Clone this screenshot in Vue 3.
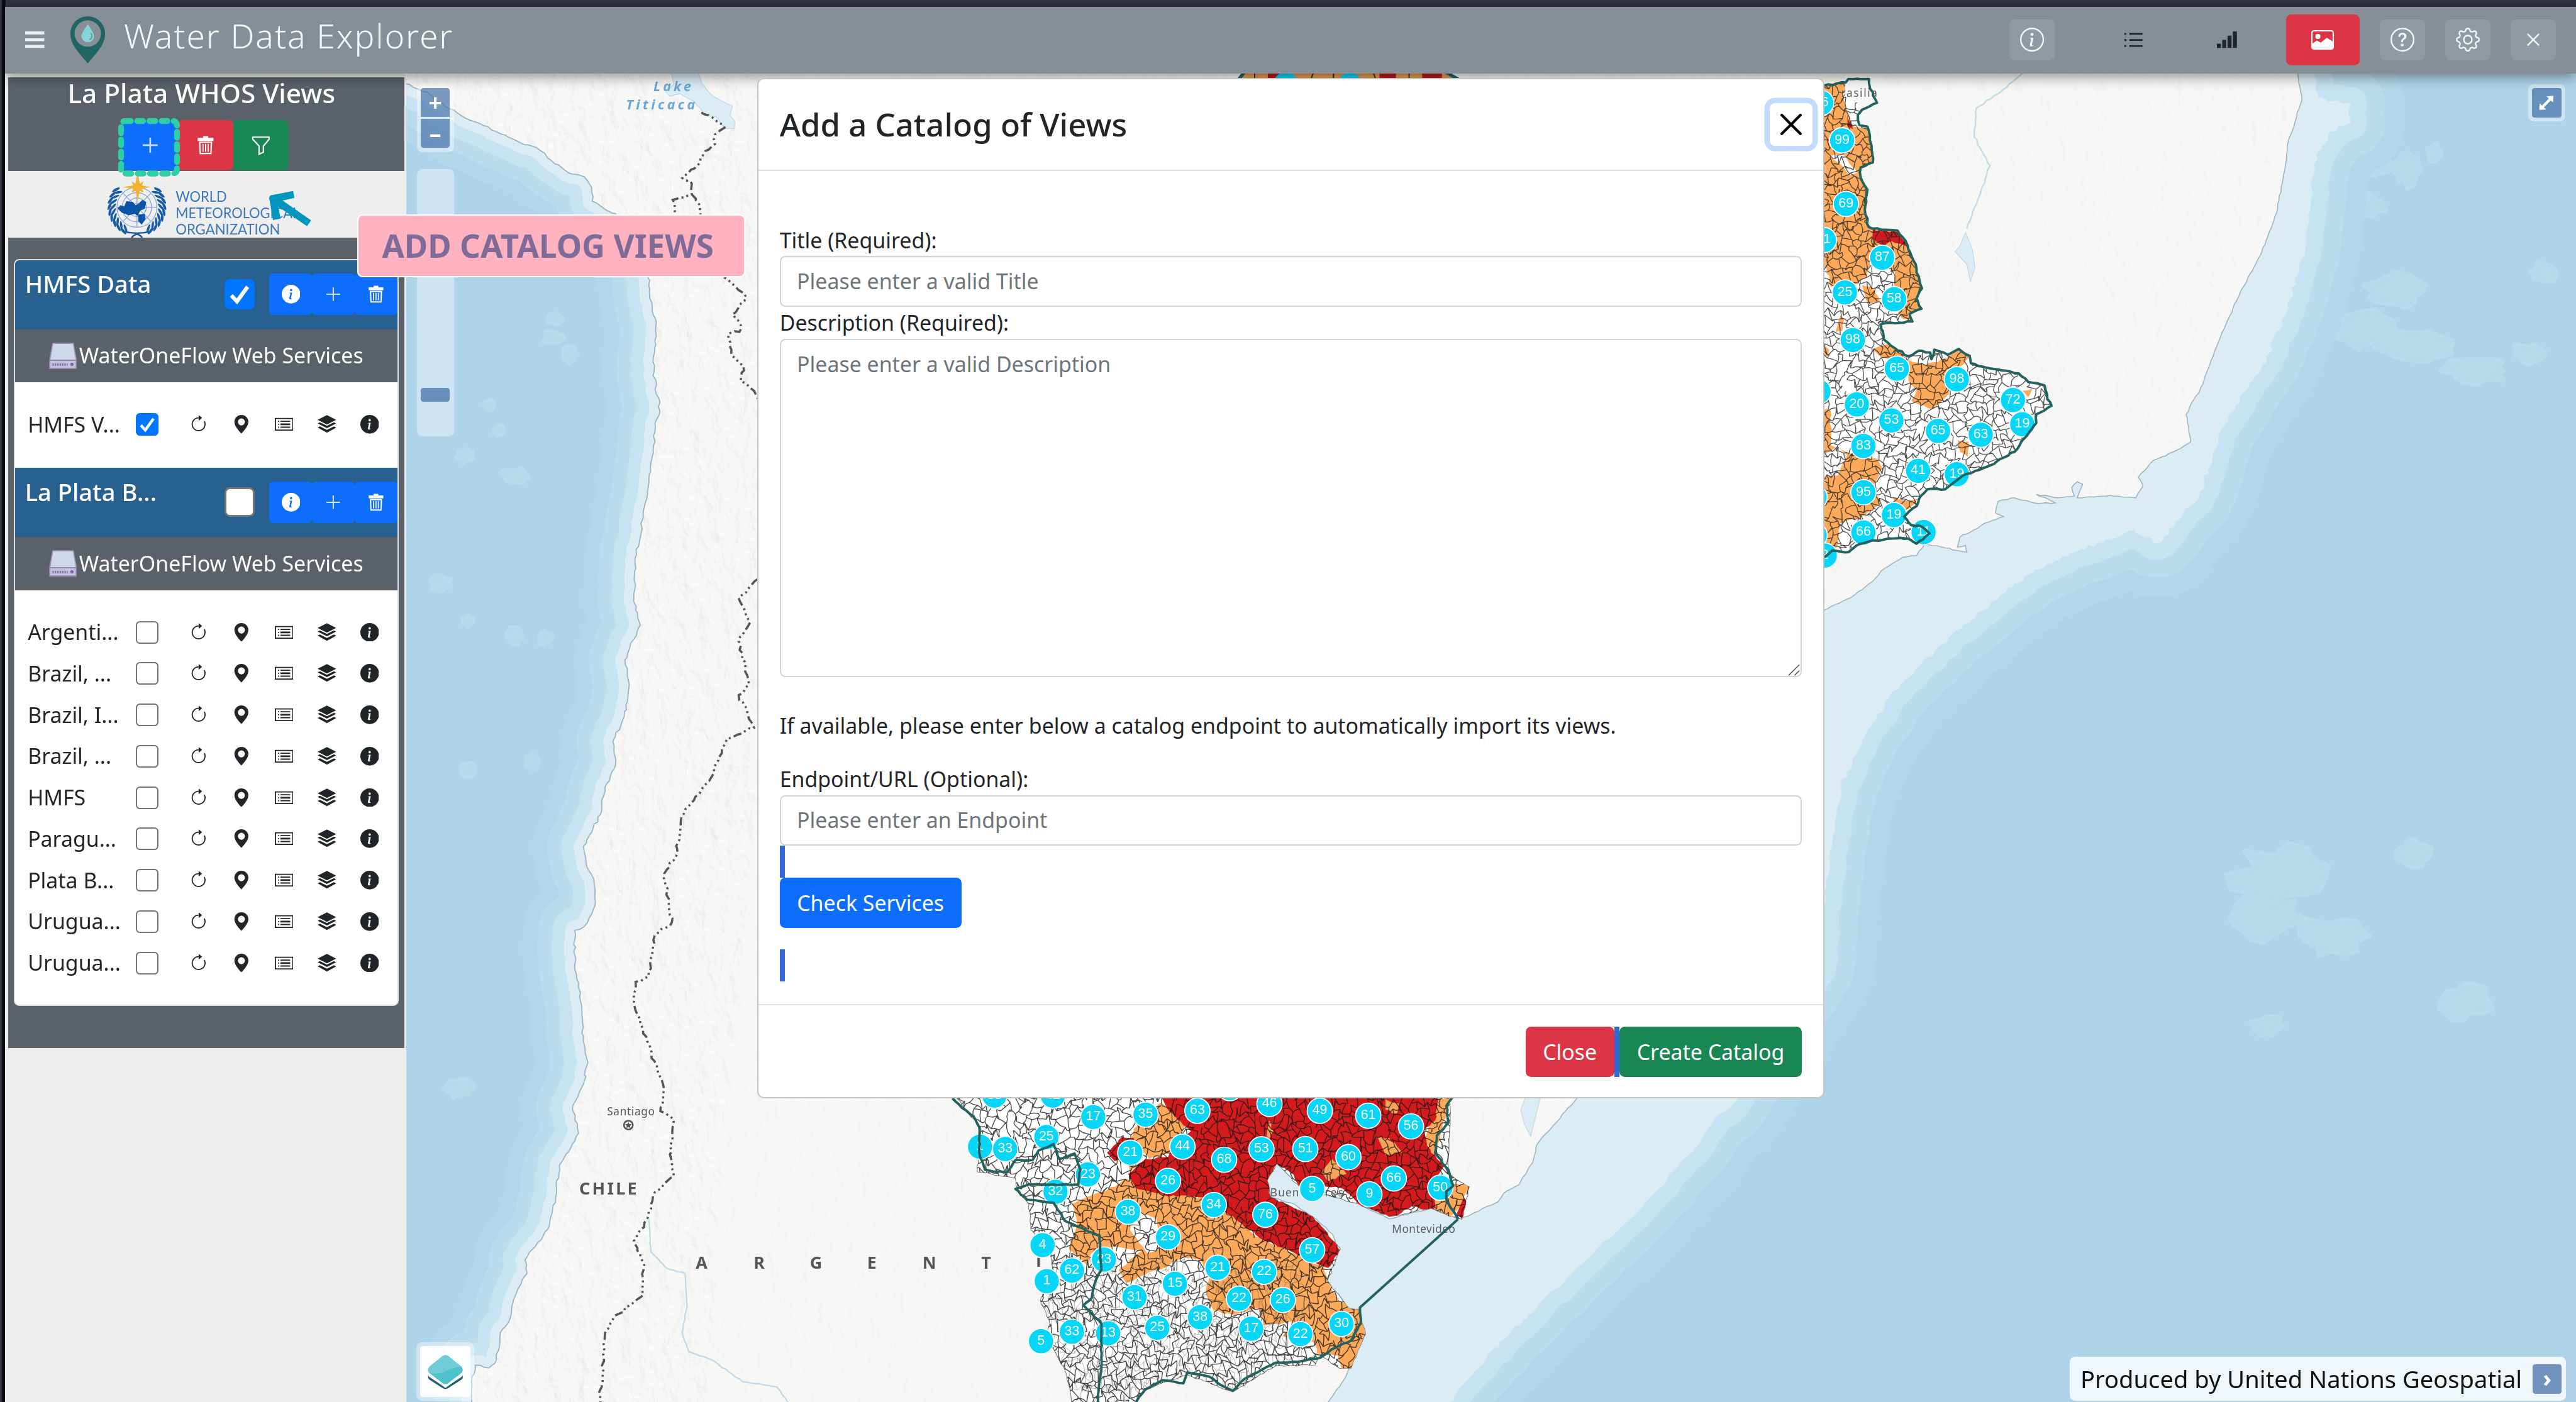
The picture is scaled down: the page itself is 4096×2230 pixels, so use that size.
<script setup>
/* ---------- deterministic helpers for the map drawing ---------- */
let seed = 7
const rnd = () => {
  seed = (seed * 16807) % 2147483647
  return seed / 2147483647
}
// A sheet maps its own survey coordinates onto the map plane.
const sheet = (ox, oy, sx, sy) => (s) =>
  s.split(' ').map((p) => {
    const [x, y] = p.split(',').map(Number)
    return [ox + x * sx, oy + y * sy]
  })
const north = sheet(234, 39, 0.16582, 0.16582)
const west = sheet(234, 338, 0.23214, 0.32896)
const east = sheet(1079, 39, 0.16581, 0.20726)
const south = sheet(572, 650, 0.23214, 0.13)
const plane = sheet(0, 0, 1, 1)

const rough = (pts, amp = 0.9) => {
  const out = [pts[0]]
  for (let i = 1; i < pts.length; i++) {
    const [ax, ay] = pts[i - 1]
    const [bx, by] = pts[i]
    const n = Math.min(14, Math.max(1, Math.round(Math.hypot(bx - ax, by - ay) / 2.6)))
    for (let k = 1; k < n; k++) {
      const t = k / n
      out.push([ax + (bx - ax) * t + (rnd() - 0.5) * amp * 2, ay + (by - ay) * t + (rnd() - 0.5) * amp * 2])
    }
    out.push([bx, by])
  }
  return out
}
const line = (pts) => 'M' + pts.map((p) => p[0].toFixed(1) + ' ' + p[1].toFixed(1)).join('L')
const area = (pts) => line(pts) + 'Z'

/* ---------- coasts ---------- */
const pacific = rough([
  ...north('70,60 110,88 160,105 185,130 240,165 300,200 380,230 395,243 430,258 500,290 560,308 600,345 680,402 735,415 762,455 765,505 820,540 850,550 900,600 950,700 970,785 975,825 985,890 1000,950 1000,1000 993,1060 988,1145 1000,1170 995,1195 1010,1230 1010,1290 995,1320 990,1400 978,1480 968,1568'),
  ...west('662,0 655,80 672,130 632,195 643,240 630,300 600,345 607,390 580,430 568,480 523,540 530,570 550,600 553,650 525,688 500,695 500,760 515,810 523,900 535,940 525,975 495,1020 510,1070 460,1130 450,1190 430,1248 370,1305 375,1330 345,1370 330,1415 305,1440 295,1490 275,1505 240,1500 230,1530 228,1580'),
], 0.7)
const estuary = south('1020,1568 1055,1480 1080,1400 1118,1250 1100,1135 1075,1130 1050,1100 1018,1000 1020,950 1040,900 1045,850 1030,780 980,700 930,640 870,610 860,530 885,450 920,490 945,560 1020,540 1060,570 1100,640 1180,710 1290,660 1360,712 1395,690 1465,630 1480,590 1520,550 1555,450 1568,360')
const brazil = [
  ...plane('960,669 1000,600 1060,450 1110,372'),
  ...east('290,1568 370,1520 400,1490 480,1450 530,1445 560,1410 680,1430 715,1435 710,1415 680,1420 690,1390 740,1370 780,1350 850,1330 820,1320 830,1285 890,1275 960,1290 1040,1290 970,1265 1050,1275 1110,1270 1100,1245 1120,1228 1140,1235 1120,1275 1240,1268 1335,1275 1362,1240 1345,1215 1400,1165 1500,1130 1537,1110 1520,1030 1545,990 1568,965'),
  ...plane('1352,205 1364,178 1376,156 1386,130 1391,104 1393,87 1396.7,77 1398.5,69 1401.5,61 1398,40'),
]
const atlantic = rough([...estuary, ...brazil], 0.35)
const land = area([...plane('240,30'), ...pacific, ...plane('287,870 809,870'), ...atlantic])
const pacificLine = line(pacific)
const atlanticLine = line(atlantic)

const shelfEdge = rough(plane('878,870 883,854 910,821 936,796 1000,735 1060,665 1108,590 1112,540 1121,480 1128,462 1150,425 1190,385 1217,364 1235,350 1261,337 1299,323 1314,331 1339,302 1352,262 1378,222 1392,190 1404,150 1409,100 1419,80 1431,75 1431,63 1411,60 1408,40'), 1.2)
const shelf = area([...atlantic, ...plane('1408,40'), ...[...shelfEdge].reverse()])
const shelfLine = line(shelfEdge)
const blob = (cx, cy, rx, ry) => {
  const n = 16
  const pts = []
  for (let k = 0; k < n; k++) {
    const r = 0.65 + rnd() * 0.55
    pts.push([cx + Math.cos((k / n) * 6.283) * rx * r, cy + Math.sin((k / n) * 6.283) * ry * r])
  }
  return area(pts)
}
const seamounts = [
  [1446, 100, 9, 6], [1466, 104, 8, 10], [1482, 93, 4, 5], [1440, 125, 12, 7], [1458, 178, 18, 10], [1436, 200, 26, 12],
  [1470, 212, 22, 9], [1508, 226, 20, 7], [1540, 215, 12, 6], [1548, 166, 8, 6], [1420, 168, 10, 12],
  [1393, 533, 32, 18], [1378, 560, 24, 14], [1420, 570, 20, 12], [1470, 520, 10, 8], [1500, 610, 16, 10], [1380, 625, 10, 6],
  [338, 194, 4, 3], [337, 206, 6, 4], [347, 216, 4, 5], [298, 247, 3, 3], [304, 262, 3, 3], [283, 277, 5, 4], [314, 290, 8, 4],
  [313, 387, 5, 5], [332, 389, 4, 4], [285, 378, 3, 3], [268, 355, 6, 5], [324, 464, 4, 4], [285, 469, 4, 4], [280, 663, 8, 5],
].map((m) => blob(...m))

/* ---------- inland water, borders ---------- */
const titicaca = area(rough(north('1055,35 1155,35 1165,70 1210,120 1280,155 1270,190 1290,215 1285,240 1250,235 1220,195 1180,190 1140,140 1085,110 1050,120 1035,105 1065,75'), 0.3))
const reservoir = area(east('710,495 735,545 745,600 728,640 715,590 672,552 690,535'))
const lagoon = area(plane('929,668 938,668 934,684 932,692 928,684 926,676'))
const rivers = [
  line(rough(east('930,20 850,75 750,130 742,215 800,300 755,400 715,485'), 0.5)),
  line(rough(west('695,1230 700,1290 740,1320 790,1330 795,1390 782,1440 800,1475 860,1490 940,1530 1030,1540 1070,1580'), 0.3)),
]
const borders = [
  north('1165,180 1215,205 1250,235 1215,260 1215,295 1180,320 1140,385 1095,420 1130,440 1130,480 1060,500 1068,548 1120,650'),
  north('1130,480 1160,520 1160,548 1200,700 1250,785 1300,830 1330,860 1280,920 1310,960 1305,985 1265,990 1275,1070 1320,1110 1310,1165 1345,1190 1375,1235'),
  west('980,45 930,80 960,125 930,160 957,240 930,260 970,320 900,340 860,410 780,485 765,560 735,590 755,680 710,705 695,780 660,790 655,830 690,900 735,990 725,1030 760,1045 750,1110 760,1150 710,1180 690,1230 655,1270 680,1310 680,1370 600,1415 580,1440 565,1580'),
].map((p) => line(rough(p, 0.8)))

/* ---------- catchment ---------- */
const eastRim = rough(east('160,70 188,65 270,55 280,45 355,45 360,75 385,115 330,135 315,150 320,180 350,185 365,240 370,290 325,305 325,335 350,370 340,430 355,480 400,488 460,490 490,520 520,580 550,660 530,690 548,720 505,735 515,757 400,765 410,810 450,835 500,860 540,843 580,848 585,868 595,840 645,855 685,838 725,858 730,880 800,895 905,910 940,935 1000,945 1010,985 1025,1005 970,1030 970,1055 915,1110 890,1140 800,1180 700,1210 635,1250 570,1250 545,1270 530,1300 485,1330 510,1355 550,1360 578,1380 530,1410 500,1395 440,1395 370,1400 310,1415 280,1435 220,1430 180,1460'), 0.5)
const southRim = south('35,145 60,190 90,230 105,280 105,400 120,480 150,490 180,490 200,435 245,435 260,390 300,360 315,430 355,405 370,480 365,550 290,550 235,548 200,570 230,620 300,635 330,720 420,790 425,950 410,1000 400,1080 378,1115 425,1200 425,1400 415,1580')
const southRim2 = south('510,1580 540,1510 585,1465 640,1480 650,1430 710,1450 740,1490 770,1515 800,1460 880,1385 940,1380 1000,1360 1030,1320 1080,1280 1105,1200 1103,1125')
const southRim3 = south('1360,712 1330,620 1330,580 1348,555 1335,480 1300,400 1305,320 1335,260 1330,180 1350,130')
const rims = [line(eastRim), line(rough(southRim, 0.3)), line(rough(southRim2, 0.3)) + 'L' + line(south('1103,1125 1360,712')).slice(1), line(rough(southRim3, 0.4))]
const eastBasin = area(eastRim)
const southBasin = area(rough(south('40,130 110,290 100,490 200,520 205,570 235,640 240,760 290,860 300,960 265,1090 290,1200 280,1260 330,1420 350,1580 510,1580 540,1510 650,1440 770,1520 880,1400 985,1395 1000,1350 1050,1410 1080,1410 1118,1250 1100,1135 1075,1130 1018,1000 1052,850 980,700 880,615 870,610 860,530 885,450 945,560 1100,640 1180,700 1290,660 1330,690 1370,712 1390,560 1335,500 1340,130'), 0.5))

const orange = [
  east('160,70 280,45 285,65 260,90 280,150 300,185 350,190 365,240 370,290 325,305 325,335 350,370 340,430 355,480 400,488 460,490 490,520 520,580 550,660 548,720 510,755 480,750 440,700 450,610 360,580 350,620 300,650 215,655 200,600 160,590'),
  east('330,650 365,655 395,700 350,705'), east('250,740 265,750 258,785 232,790'),
  east('370,840 450,812 490,870 440,872 400,862'),
  east('500,870 560,885 640,865 685,840 725,860 690,890 640,925 650,970 590,1015 510,990 530,960 500,930'),
  east('160,1010 215,1020 215,1120 270,1140 390,1165 405,1190 370,1240 400,1290 330,1330 250,1350 240,1420 160,1430'),
  east('440,1270 490,1285 535,1278 500,1310 460,1300'), east('680,1105 720,1110 718,1155 690,1140'), east('920,960 955,955 940,980'),
  east('160,820 210,840 200,860 160,850'),
  south('490,520 590,590 690,610 760,690 840,800 940,880 1010,940 1018,1000 1050,1100 1100,1135 1118,1250 1080,1412 1055,1412 1045,1350 990,1340 985,1290 900,1260 930,1190 850,1210 840,1130 770,1160 720,1140 700,1060 710,960 680,900 640,890 590,940 550,960 490,1010 470,950 530,860 460,840 400,870 390,930 340,850 360,740 350,640 400,600 460,560'),
  south('580,165 650,250 610,400 550,430 505,330 510,290'), south('495,420 520,440 500,500'),
  south('1310,145 1340,145 1330,200 1320,290 1300,420 1270,340 1290,250'),
  south('1330,540 1392,555 1370,640 1340,700 1300,670 1300,560'),
]
const red = [
  east('370,488 460,495 498,540 440,522 400,532 368,515'), east('275,150 297,192 278,185'), east('160,205 195,205 195,225 160,230'),
  south('580,130 1310,130 1300,250 1270,300 1290,400 1325,460 1290,560 1302,660 1280,670 1240,650 1190,710 1100,640 1060,570 1040,560 945,560 920,490 885,450 860,530 870,610 980,700 1030,780 1052,860 1020,940 940,880 840,800 760,690 690,610 590,600 520,570 495,500 540,430 600,420 660,300 600,200'),
  south('440,400 480,325 510,330 515,420 460,440'), south('1375,610 1384,630 1372,712 1356,690'),
]
const gold = [south('1150,330 1180,330 1215,400 1170,410'), south('1030,430 1068,500 1020,535 1002,490'), south('865,250 876,300 866,335 858,320'), south('1170,150 1205,170 1200,215 1170,200')]
const holes = [east('210,272 260,265 312,322 285,328 250,295'), east('350,600 450,610 440,650 400,690 350,640'), south('520,670 570,710 580,850 545,870 500,760'), east('180,1150 240,1125 275,1150 240,1210 180,1215')]
const fills = [
  ...orange.map((p) => ({ d: area(rough(p, 0.7)), c: '#fca95a' })),
  ...red.map((p) => ({ d: area(rough(p, 0.7)), c: '#d31a1d' })),
  ...gold.map((p) => ({ d: area(rough(p, 0.7)), c: '#f5a557' })),
  ...holes.map((p) => ({ d: area(rough(p, 0.5)), c: '#ffffff' })),
]

// Sub-catchment mesh: a brick lattice whose nodes are shaken out of place.
const mesh = (x0, y0, x1, y1, w, h) => {
  const nx = Math.ceil((x1 - x0) / w)
  const ny = Math.ceil((y1 - y0) / h)
  const v = []
  for (let j = 0; j <= ny; j++) {
    v.push([])
    for (let i = 0; i <= nx; i++) v[j].push([x0 + i * w + (rnd() - 0.5) * w * 1.5, y0 + j * h + (rnd() - 0.5) * h * 1.4])
  }
  const f = (p) => p[0].toFixed(1) + ' ' + p[1].toFixed(1)
  const mid = (a, b) => [(a[0] + b[0]) / 2 + (rnd() - 0.5) * 1.5, (a[1] + b[1]) / 2 + (rnd() - 0.5) * 1.5]
  let d = ''
  for (let j = 0; j <= ny; j++)
    for (let i = 0; i <= nx; i++) {
      if (i < nx && rnd() > 0.08) d += 'M' + f(v[j][i]) + 'L' + f(mid(v[j][i], v[j][i + 1])) + 'L' + f(v[j][i + 1])
      if (j < ny && (i + j) % 2 === 0) d += 'M' + f(v[j][i]) + 'L' + f(mid(v[j][i], v[j + 1][i])) + 'L' + f(v[j + 1][i])
    }
  return d
}
const eastMesh = mesh(1106, 42, 1254, 352, 2.8, 4)
const southMesh = mesh(572, 664, 905, 856, 2.8, 4.4)
const pampaMesh = mesh(600, 770, 790, 856, 2.6, 6.5)

/* ---------- station clusters ---------- */
const pins = (project, rows) => rows.map(([x, y, n]) => {
  const [[px, py]] = project(x + ',' + y)
  return { x: px, y: py, n }
})
const stations = [
  ...pins(east, [[180, 115, '56'], [257, 225, '99'], [271, 412, '69'], [190, 518, '11'], [404, 570, '87'], [267, 672, '25'], [448, 692, '58'], [296, 812, '98'], [458, 896, '65'], [678, 927, '98'], [170, 963, ''], [311, 1001, '20'], [884, 988, '72'], [918, 1059, '19'], [438, 1048, '53'], [609, 1079, '65'], [766, 1090, '63'], [335, 1123, '83'], [536, 1196, '41'], [678, 1206, '19'], [335, 1259, '95'], [156, 1273, ''], [447, 1326, '19'], [335, 1377, '66'], [556, 1376, '11'], [156, 1385, ''], [193, 1445, '2']]),
  ...pins(south, [[145, 133, '33'], [298, 133, '42'], [404, 233, '17'], [541, 222, '35'], [677, 204, '63'], [762, 98, ''], [866, 172, '46'], [998, 204, '49'], [1125, 227, '61'], [1237, 277, '56'], [281, 327, '25'], [107, 372, '1'], [173, 383, '33'], [501, 400, '21'], [638, 372, '44'], [747, 433, '68'], [845, 384, '53'], [960, 383, '51'], [1073, 421, '60'], [390, 502, '23'], [600, 532, '26'], [978, 570, '5'], [1128, 595, '9'], [1192, 521, '66'], [1314, 564, '50'], [305, 583, '32'], [495, 677, '38'], [720, 645, '34'], [855, 691, '76'], [600, 796, '29'], [978, 857, '57'], [271, 833, '4'], [348, 952, '62'], [432, 901, '23'], [730, 939, '21'], [852, 958, '22'], [282, 1002, '1'], [618, 1014, '15'], [512, 1077, '31'], [786, 1084, '22'], [901, 1090, '26'], [348, 1239, '33'], [443, 1246, '13'], [572, 1220, '25'], [684, 1171, '38'], [818, 1225, '17'], [947, 1250, '22'], [1055, 1202, '30'], [267, 1283, '5']]),
]
const argentina = [['A', 427.4], ['R', 462.4], ['G', 497], ['E', 531], ['N', 566], ['T', 600.6]]

/* ---------- sidebar data ---------- */
const catalogs = [
  { title: 'HMFS Data', on: true, tall: true, views: [{ name: 'HMFS V...', on: true }] },
  {
    title: 'La Plata B...', on: false, tall: false,
    views: ['Argenti...', 'Brazil, ...', 'Brazil, I...', 'Brazil, ...', 'HMFS', 'Paragu...', 'Plata B...', 'Urugua...', 'Urugua...'].map((name) => ({ name, on: false })),
  },
]
const glyphs = {
  info: ['M8 16A8 8 0 1 0 8 0a8 8 0 0 0 0 16m.93-9.412-1 4.705c-.07.34.029.533.304.533.194 0 .487-.07.686-.246l-.088.416c-.287.346-.92.598-1.465.598-.703 0-1.002-.422-.808-1.319l.738-3.468c.064-.293.006-.399-.287-.47l-.451-.081.082-.381 2.29-.287zM8 5.5a1 1 0 1 1 0-2 1 1 0 0 1 0 2'],
  plus: ['M7.500 2.200h1v5.300h5.300v1H8.500v5.300h-1V8.500H2.200v-1h5.300z'],
  trash: ['M6 .8h4v1.300h4.300v2.600H1.700V2.100H6zM2.700 5.200h10.600l-.5 10H3.200zM3.900 6.300l.3 7.800h7.600l.3-7.800z', 'M5.500 7h.9v6.300h-.9zM7.550 7h.9v6.300h-.9zM9.600 7h.9v6.300h-.9z'],
  reload: ['M8 3a5 5 0 1 0 4.546 2.914.5.5 0 0 1 .908-.417A6 6 0 1 1 8 2z', 'M8 4.466V.534a.25.25 0 0 1 .41-.192l2.36 1.966c.12.1.12.284 0 .384L8.41 4.658A.25.25 0 0 1 8 4.466'],
  pin: ['M8 16s6-5.686 6-10A6 6 0 0 0 2 6c0 4.314 6 10 6 10m0-7a3 3 0 1 1 0-6 3 3 0 0 1 0 6'],
  card: ['M0 2.500h16v11H0zM1 3.500v9h14v-9z', 'M2.800 5h1v1h-1zM2.800 7.500h1v1h-1zM2.800 10h1v1h-1zM4.800 5h8.400v1H4.800zM4.800 7.300h8.400v1.400H4.800zM4.800 10h8.400v1H4.800z'],
  layers: ['M8 .2 16 4.200 8 8.200 0 4.200z', 'M0 7.300 2 6.300 8 9.300l6-3 2 1-8 4z', 'M0 10.800l2-1 6 3 6-3 2 1-8 4.500z'],
}
const rowGlyphs = ['reload', 'pin', 'card', 'layers', 'info']
const gearPaths = [
  'M8 4.754a3.246 3.246 0 1 0 0 6.492 3.246 3.246 0 0 0 0-6.492M5.754 8a2.246 2.246 0 1 1 4.492 0 2.246 2.246 0 0 1-4.492 0',
  'M9.796 1.343c-.527-1.79-3.065-1.79-3.592 0l-.094.319a.873.873 0 0 1-1.255.52l-.292-.16c-1.64-.892-3.433.902-2.54 2.541l.159.292a.873.873 0 0 1-.52 1.255l-.319.094c-1.79.527-1.79 3.065 0 3.592l.319.094a.873.873 0 0 1 .52 1.255l-.16.292c-.892 1.64.901 3.434 2.541 2.54l.292-.159a.873.873 0 0 1 1.255.52l.094.319c.527 1.79 3.065 1.79 3.592 0l.094-.319a.873.873 0 0 1 1.255-.52l.292.16c1.64.893 3.434-.902 2.54-2.541l-.159-.292a.873.873 0 0 1 .52-1.255l.319-.094c1.79-.527 1.79-3.065 0-3.592l-.319-.094a.873.873 0 0 1-.52-1.255l.16-.292c.893-1.64-.902-3.433-2.541-2.54l-.292.159a.873.873 0 0 1-1.255-.52zm-2.633.283c.246-.835 1.428-.835 1.674 0l.094.319a1.873 1.873 0 0 0 2.693 1.115l.291-.16c.764-.415 1.6.42 1.184 1.185l-.159.292a1.873 1.873 0 0 0 1.116 2.692l.318.094c.835.246.835 1.428 0 1.674l-.319.094a1.873 1.873 0 0 0-1.115 2.693l.16.291c.415.764-.42 1.6-1.185 1.184l-.291-.159a1.873 1.873 0 0 0-2.693 1.116l-.094.318c-.246.835-1.428.835-1.674 0l-.094-.319a1.873 1.873 0 0 0-2.692-1.115l-.292.16c-.764.415-1.6-.42-1.184-1.185l.159-.291A1.873 1.873 0 0 0 1.945 8.93l-.319-.094c-.835-.246-.835-1.428 0-1.674l.319-.094A1.873 1.873 0 0 0 3.06 4.377l-.16-.292c-.415-.764.42-1.6 1.185-1.184l.292.159a1.873 1.873 0 0 0 2.692-1.115z',
]
const questionPath = 'M5.255 5.786a.237.237 0 0 0 .241.247h.825c.138 0 .248-.113.266-.25.09-.656.54-1.134 1.342-1.134.686 0 1.314.343 1.314 1.168 0 .635-.374.927-.965 1.371-.673.489-1.206 1.06-1.168 1.987l.003.217a.25.25 0 0 0 .25.246h.811a.25.25 0 0 0 .25-.25v-.105c0-.718.273-.927 1.01-1.486.609-.463 1.244-.977 1.244-2.056 0-1.511-1.276-2.241-2.673-2.241-1.267 0-2.655.59-2.75 2.286m1.557 5.763c0 .533.425.927 1.01.927.609 0 1.028-.394 1.028-.927 0-.552-.42-.94-1.029-.94-.584 0-1.009.388-1.009.94'
const leaves = Array.from({ length: 9 }, (_, i) => 30 + i * 12.5)
</script>

<template>
  <div class="screen">
    <header class="topbar">
      <svg class="burger" viewBox="0 0 14.400 12.400"><path d="M0 0h14.400v2.200H0zM0 5.100h14.400v2.200H0zM0 10.200h14.400v2.200H0z" fill="#eeeff0" /></svg>
      <svg class="brand" viewBox="0 0 26 35.300">
        <path fill-rule="evenodd" fill="#226463" d="M13 0C5.600 0 0 5.800 0 13.200 0 21 6 27 13 35.300 20 27 26 21 26 13.200 26 5.800 20.400 0 13 0zM13 3a9.900 9.900 0 0 1 0 19.800A9.900 9.900 0 0 1 13 3z" />
        <path fill="#86d5d6" d="M13 5.800c2.200 4 4.700 6.300 4.700 9.300a4.700 4.300 0 0 1-9.400 0c0-3 2.500-5.300 4.700-9.300z" />
        <path fill="none" stroke="#63989b" stroke-width=".9" d="M15.300 12.500c1.300 2 .9 4.200-1.100 5" />
      </svg>
      <h1>Water Data Explorer</h1>
      <nav class="tools">
        <span class="chip info"><svg viewBox="0 0 16 16"><circle cx="8" cy="8" r="7.500" fill="none" stroke="#f4f5f6" /><path fill="#f4f5f6" d="m8.930 6.588-2.290.287-.082.380.450.083c.294.070.352.176.288.469l-.738 3.468c-.194.897.105 1.319.808 1.319.545 0 1.178-.252 1.465-.598l.088-.416c-.2.176-.492.246-.686.246-.275 0-.375-.193-.304-.533zM9 4.500a1 1 0 1 1-2 0 1 1 0 0 1 2 0" /></svg></span>
        <svg class="bare list" viewBox="0 0 14 12"><path fill="#212529" d="M0 .5h1.500v1.500H0zM0 5.200h1.500v1.500H0zM0 9.900h1.500v1.500H0zM3.800.6H14v1.300H3.800zM3.800 5.300H14v1.300H3.800zM3.800 10H14v1.300H3.800z" /></svg>
        <svg class="bare bars" viewBox="0 0 15.200 12.400"><path fill="#212529" d="M0 9.200h3v3.200H0zM4 6.400h3v6H4zM8 3.200h3v9.200H8zM12 0h3v12.400h-3z" /></svg>
        <span class="picture"><svg viewBox="0 0 17 14.600"><path fill="#fff" fill-rule="evenodd" d="M2 0h13a2 2 0 0 1 2 2v10.600a2 2 0 0 1-2 2H2a2 2 0 0 1-2-2V2a2 2 0 0 1 2-2zm0 1a1 1 0 0 0-1 1v8l3.200-2.200 3 1.500 4.500-3.600L16 8.500V2a1 1 0 0 0-1-1z" /><circle cx="5" cy="4.700" r="1.900" fill="#fff" /></svg></span>
        <span class="chip"><svg viewBox="0 0 16 16"><circle cx="8" cy="8" r="7.500" fill="none" stroke="#f4f5f6" /><path fill="#f4f5f6" :d="questionPath" /></svg></span>
        <span class="chip"><svg viewBox="0 0 16 16" fill="#f4f5f6"><path v-for="(p, i) in gearPaths" :key="i" :d="p" /></svg></span>
        <span class="chip"><svg viewBox="0 0 18 18"><path fill="none" stroke="#f4f5f6" stroke-width="1.200" stroke-linecap="round" d="M5 5l8 8M13 5l-8 8" /></svg></span>
      </nav>
    </header>

    <div class="body">
      <aside>
        <section class="head">
          <h5>La Plata WHOS Views</h5>
          <div class="actions">
            <span class="act add"><svg viewBox="0 0 16 16"><path d="M8 2v12M2 8h12" stroke="#c5dbff" stroke-width="1.300" fill="none" /></svg></span>
            <span class="act del"><svg viewBox="0 0 16 16" fill="#fff" fill-rule="evenodd"><path v-for="(p, i) in glyphs.trash" :key="i" :d="p" /></svg></span>
            <span class="act filter"><svg viewBox="0 0 16 16"><path d="M1.500 1.500h13v1.800L10 8.700v4.900l-3.500 1.700V8.700L1.500 3.300z" fill="none" stroke="#fff" stroke-width="1.100" /></svg></span>
            <svg class="dashes" viewBox="0 0 48 46"><rect x="2.600" y="2.600" width="42" height="39.400" rx="3" fill="none" stroke="#2fcfa3" stroke-width="4.400" stroke-linecap="round" stroke-dasharray="4.300 4.860" /></svg>
          </div>
        </section>

        <section class="sponsor">
          <svg class="wmo" viewBox="80 128.300 150 50.100">
            <g fill="none" stroke="#7fa6d2" stroke-width=".6">
              <circle cx="103" cy="155.500" r="15" /><circle cx="103" cy="155.500" r="11" /><circle cx="103" cy="155.500" r="7" /><circle cx="103" cy="155.500" r="3" />
              <path d="M88 155.500h30M103 140.500v30M92.400 144.900l21.200 21.200M113.600 144.900l-21.200 21.200" />
            </g>
            <path fill="#0a53a5" d="M95 151l5 .5 2 2.500 2-1 3-3 3 1.500-1 5-3.500 1.500-2 4-2-1.500-5 1-5-2-3-3 2-2.500 3 1zM104 161l5-.5.500 4-3 4-2.500-2.500z" />
            <g fill="#1a5ba8">
              <g v-for="a in leaves" :key="a">
                <g :transform="`rotate(${-a} 103 155.500)`"><ellipse cx="102.500" cy="173.500" rx=".9" ry="3.200" transform="rotate(50 102.500 173.500)" /><ellipse cx="103" cy="176" rx="1" ry="3.200" transform="rotate(68 103 176)" /></g>
                <g :transform="`rotate(${a} 103 155.500)`"><ellipse cx="103.500" cy="173.500" rx=".9" ry="3.200" transform="rotate(-50 103.500 173.500)" /><ellipse cx="103" cy="176" rx="1" ry="3.200" transform="rotate(-68 103 176)" /></g>
              </g>
            </g>
            <path d="M92 173.500q11 3 22 0M99 178.400q4-5 8 0" fill="none" stroke="#1a5ba8" stroke-width="1.200" />
            <path fill="#f3b234" d="M103.500 128.500l1.600 9.200 3-1.700-1.300 3.200 6.200 1.100-6.200 1.300 1.300 3-3-1.400-1.600 7.800-1.600-7.800-3 1.400 1.300-3-7.800-1.300 7.800-1.100-1.300-3.200 3 1.700z" />
            <g fill="#3d78b9" font-family="Lato, sans-serif" font-size="10.500">
              <text x="132" y="151.600" textLength="38.500" lengthAdjust="spacingAndGlyphs">WORLD</text>
              <text x="132" y="163.700" textLength="93" lengthAdjust="spacingAndGlyphs">METEOROLOGICAL</text>
              <text x="132" y="175.800" textLength="78.500" lengthAdjust="spacingAndGlyphs">ORGANIZATION</text>
            </g>
          </svg>
        </section>

        <section class="lists">
          <div class="card">
            <template v-for="c in catalogs" :key="c.title">
              <div class="group">
                <span class="name">{{ c.title }}</span>
                <span class="box big" :class="{ on: c.on }"><svg v-if="c.on" viewBox="0 0 16 16"><path d="M3 8.800 6.500 12.500 13 3.500" fill="none" stroke="#fff" stroke-width="2.400" /></svg></span>
                <span class="trio">
                  <span v-for="g in ['info', 'plus', 'trash']" :key="g"><svg viewBox="0 0 16 16" fill="#fff" fill-rule="evenodd"><path v-for="(p, i) in glyphs[g]" :key="i" :d="p" /></svg></span>
                </span>
              </div>
              <div class="service">
                <svg viewBox="0 0 21 20">
                  <path d="M2.800.5h15.400l2.300 13v6H.5v-6z" fill="#cdd8ed" stroke="#a593b5" stroke-width=".8" />
                  <path d="M.5 13.200h20v6.300H.5z" fill="#bfc3df" stroke="#9b84ad" stroke-width=".9" />
                  <path d="M2.500 16.500h11.500" stroke="#8d6fa0" stroke-width="1.800" stroke-dasharray="1.100 .7" /><circle cx="17.200" cy="16.300" r="1.200" fill="#7d6096" />
                </svg>
                <span>WaterOneFlow Web Services</span>
              </div>
              <div class="views" :class="{ tall: c.tall }">
                <div v-for="(v, k) in c.views" :key="k" class="view">
                  <span class="label">{{ v.name }}</span>
                  <span class="box" :class="{ on: v.on }"><svg v-if="v.on" viewBox="0 0 16 16"><path d="M3 8.800 6.500 12.500 13 3.500" fill="none" stroke="#fff" stroke-width="2.200" /></svg></span>
                  <span v-for="g in rowGlyphs" :key="g" class="cell"><svg viewBox="0 0 16 16" fill="#212529" fill-rule="evenodd"><path v-for="(p, i) in glyphs[g]" :key="i" :d="p" /></svg></span>
                </div>
              </div>
            </template>
          </div>
        </section>
      </aside>

      <main class="map">
        <svg class="chart" viewBox="247.600 45 1320.840 809" preserveAspectRatio="none">
          <defs>
            <clipPath id="landClip"><path :d="land" /></clipPath>
            <clipPath id="eastClip"><path :d="eastBasin" /></clipPath>
            <clipPath id="southClip"><path :d="southBasin" /></clipPath>
            <filter id="relief" x="0" y="0" width="100%" height="100%">
              <feTurbulence type="fractalNoise" baseFrequency="0.11 0.07" numOctaves="4" seed="4" />
              <feDiffuseLighting surfaceScale="2.600" lighting-color="#fff"><feDistantLight azimuth="315" elevation="70" /></feDiffuseLighting>
            </filter>
            <mask id="andes"><path d="M240 30H480L470 400 440 700 430 860H240z" fill="#fff" /><path d="M480 30H1420V400H1100L900 860H430L440 700 470 400z" fill="#666" /></mask>
          </defs>
          <rect x="240" y="30" width="1340" height="840" fill="#afd3e9" />
          <path v-for="(m, i) in seamounts" :key="i" :d="m" fill="#bbdeee" stroke="#bbdeee" stroke-width="3" stroke-linejoin="round" opacity=".7" />
          <g fill="none" stroke-linejoin="round">
            <path :d="pacificLine" stroke="#b3d6ea" stroke-width="62" /><path :d="pacificLine" stroke="#bbdcef" stroke-width="44" />
            <path :d="pacificLine" stroke="#c6e3f1" stroke-width="27" /><path :d="pacificLine" stroke="#dbecf5" stroke-width="12" />
            <path :d="shelfLine" stroke="#b3d6ea" stroke-width="66" /><path :d="shelfLine" stroke="#bbdcef" stroke-width="42" /><path :d="shelfLine" stroke="#c6e3f1" stroke-width="20" />
          </g>
          <path :d="shelf" fill="#dbecf5" />
          <path :d="land" fill="#f7f7f5" />
          <g clip-path="url(#landClip)"><g mask="url(#andes)"><rect class="shade" x="240" y="30" width="1200" height="840" filter="url(#relief)" opacity=".2" /></g></g>
          <path :d="pacificLine" fill="none" stroke="#9db5c0" stroke-width=".7" />
          <path :d="atlanticLine" fill="none" stroke="#9db5c0" stroke-width=".6" />
          <g fill="#dbecf5" stroke="#b9d5e3" stroke-width=".4"><path :d="titicaca" /><path :d="reservoir" /><path :d="lagoon" /></g>
          <path v-for="(r, i) in rivers" :key="'r' + i" :d="r" fill="none" stroke="#c3dae7" stroke-width=".9" />
          <path v-for="(b, i) in borders" :key="'b' + i" :d="b" fill="none" stroke="#555" stroke-width="1.350" stroke-dasharray="5 2 1.200 2 1.200 2 1.200 2" />

          <g font-family="'Noto Sans', sans-serif">
            <g fill="#6ba8d6" font-style="italic" font-weight="700" font-size="8.200">
              <text x="398" y="55.800" textLength="23">Lake</text><text x="381.400" y="66.900" textLength="42">Titicaca</text>
            </g>
            <g fill="#555">
              <text x="369.800" y="679.200" font-size="6.600" textLength="29">Santiago</text>
              <text x="352.900" y="727.500" font-size="10.300" font-weight="700" textLength="35">CHILE</text>
              <text v-for="a in argentina" :key="a[0]" :x="a[1]" y="772.800" font-size="10.300" font-weight="700" text-anchor="middle">{{ a[0] }}</text>
            </g>
            <circle cx="382.800" cy="685.200" r="2.700" fill="#fff" stroke="#555" stroke-width="1" />
            <path d="M382.800 683.300l.6 1.300 1.400.1-1 1 .3 1.400-1.300-.7-1.300.7.3-1.400-1-1 1.400-.1z" fill="#555" />
          </g>

          <path :d="eastBasin" fill="#fff" /><path :d="southBasin" fill="#fff" stroke="#777" stroke-width=".4" />
          <g clip-path="url(#eastClip)">
            <path v-for="(f, i) in fills" :key="i" :d="f.d" :fill="f.c" />
            <path :d="eastMesh" fill="none" stroke="#222" stroke-width=".5" opacity=".8" />
          </g>
          <path d="M1124 46l23-2 2 10 2 11-12 4-3 8-3-4-2-10-8-5z" fill="#f8f8f7" />
          <g clip-path="url(#southClip)">
            <path v-for="(f, i) in fills" :key="i" :d="f.d" :fill="f.c" />
            <path :d="southMesh" fill="none" stroke="#161616" stroke-width=".52" opacity=".8" />
            <path :d="pampaMesh" fill="none" stroke="#444" stroke-width=".3" opacity=".5" />
          </g>
          <path d="M632.500 766v5.500" stroke="#555" stroke-width="1.600" />
          <path d="M754 50l4-6h122l8 6z" fill="#e89a50" /><path d="M772 44h14v5h-14zM840 44h10v5h-10zM866 44h12v5h-12z" fill="#b8191b" />
          <path d="M764 44v5M779 44l2 5M800 44l-2 5M812 44v5M836 44l2 5M858 44v5" stroke="#222" stroke-width=".7" /><path d="M753 50l5-6M880 44l9 5" stroke="#22625f" stroke-width="2" />
          <circle cx="783" cy="51.500" r="7.500" fill="#06d7f9" /><circle cx="822" cy="52" r="7.500" fill="#06d7f9" />

          <g font-family="'Noto Sans', sans-serif" font-size="6.600" fill="#5c5c5c">
            <text x="1121" y="59.300" textLength="22">rasilia</text>
            <text x="773.500" y="728.800" textLength="17.500">Buen</text><text x="806.800" y="728.800" textLength="11.200">res</text>
            <text x="847.600" y="750.800" textLength="38.500">Montevideo</text>
          </g>
          <g v-for="(s, i) in stations" :key="'s' + i">
            <circle :cx="s.x" :cy="s.y" r="7.700" fill="#06d7f9" stroke="#fff" stroke-width=".65" />
            <text :x="s.x" :y="s.y + 2.100" class="count">{{ s.n }}</text>
          </g>
          <path v-for="(r, i) in rims" :key="'o' + i" :d="r" fill="none" stroke="#22625f" stroke-width="1.500" stroke-linejoin="round" />
        </svg>

        <div class="zoomer"><span>+</span><span>–</span></div>
        <div class="slider"><span></span></div>
        <div class="expand"><svg viewBox="0 0 22 22"><path d="M5.500 16.500l.3-5 1.700 1.700 5.300-5.300L11 6.200l5.300-.5-.3 5.200-1.700-1.600L9 14.600l1.700 1.600z" fill="#fff" /></svg></div>
        <div class="switcher">
          <svg viewBox="0 0 38 38">
            <path d="M6 21.500L19 31.500 32 21.500 32 23.500Q32 24.500 31 25.200L21 31.600Q19 33 17 31.600L7 25.200Q6 24.500 6 23.500z" fill="#1f5f70" />
            <path d="M6 19.500L19 29.500 32 19.500 32 21.500Q32 22.500 31 23.200L21 29.800Q19 31 17 29.800L7 23.200Q6 22.500 6 21.500z" fill="#fff" />
            <path d="M17 7.400Q19 6.200 21 7.400L31 15.500Q33 18 31 20.300L21 28Q19 29.300 17 28L7 20.300Q5 18 7 15.500z" fill="#4fc1cf" /><path d="M17 7.400Q19 6.200 21 7.400L31 15.500Q25 16 19 19 12 22 6.500 20 5 18 7 15.500z" fill="#6fcbd6" />
          </svg>
        </div>
        <div class="credit"><span>Produced by United Nations Geospatial</span><i>›</i></div>
      </main>
    </div>

    <div class="modal">
      <div class="mhead">
        <h4>Add a Catalog of Views</h4>
        <span class="close"><svg viewBox="0 0 16 16"><path d="M.293.293a1 1 0 0 1 1.414 0L8 6.586 14.293.293a1 1 0 1 1 1.414 1.414L9.414 8l6.293 6.293a1 1 0 0 1-1.414 1.414L8 9.414l-6.293 6.293a1 1 0 0 1-1.414-1.414L6.586 8 .293 1.707a1 1 0 0 1 0-1.414z" /></svg></span>
      </div>
      <div class="mbody">
        <div class="line first">Title (Required):</div>
        <div class="field">Please enter a valid Title</div>
        <div class="line">Description (Required):</div>
        <div class="field area">Please enter a valid Description
          <svg viewBox="0 0 10 10"><path d="M1 9.500L9 1.500M5.500 9.500L9 6" stroke="#555" stroke-width=".7" fill="none" /></svg>
        </div>
        <div class="line note">If available, please enter below a catalog endpoint to automatically import its views.</div>
        <div class="line">Endpoint/URL (Optional):</div>
        <div class="field">Please enter an Endpoint</div>
        <div class="tick"></div>
        <span class="btn blue">Check Services</span>
        <div class="tick low"></div>
      </div>
      <div class="mfoot"><span class="btn red">Close</span><span class="sep"></span><span class="btn green">Create Catalog</span></div>
    </div>

    <svg class="arrow" viewBox="0 0 32 28"><path d="M18 .3 18.900 5.600 10.100 7.500 31.500 22.400 28.400 26.800 6.800 12.200 8.600 21.100 2.900 22.200 0 5.500Q0 4 1.200 3.600z" fill="#0096bf" /></svg>
    <div class="callout">ADD CATALOG VIEWS</div>
  </div>
</template>

<style>
html, body { margin: 0; overflow: hidden; background: #fff; }
</style>

<style scoped>
* { box-sizing: border-box; }
.screen {
  zoom: 2.1186; position: relative; width: 1933.400px; height: 1052.600px; overflow: hidden;
  display: flex; flex-direction: column; padding: 5px 0 0 4px;
  background: linear-gradient(90deg, #3a3b42 0 1.100px, #0b0c17 1.100px 4px, transparent 4px), #313443;
  font: 16px/24px "Noto Sans", sans-serif; color: #212529;
}
.screen svg { display: block; }
.topbar {
  height: 50px; flex: none; display: flex; align-items: center; padding-left: 15px; padding-right: 15px;
  background: #868e96; position: relative; z-index: 2; box-shadow: 0 2px 10px rgba(0, 0, 0, .45);
}
.burger { width: 14.400px; height: 12.400px; }
.brand { width: 26px; height: 35.300px; margin-left: 19.300px; }
h1 { margin: 0 0 0 14.300px; font-weight: 300; font-size: 25.200px; line-height: 34px; letter-spacing: .900px; color: #f4f5f6; position: relative; top: -3px; }
.tools { margin-left: auto; display: flex; align-items: center; }
.chip { width: 34px; height: 31px; border-radius: 4px; background: #9199a1; display: flex; align-items: center; justify-content: center; margin-left: 15.200px; }
.chip svg { width: 18px; height: 18px; }
.chip.info { margin-left: 0; }
.list { width: 13.600px; height: 12px; margin-left: 52.200px; }
.bars { width: 15.200px; height: 12.400px; margin-left: 55.800px; }
.picture { width: 55.200px; height: 38.400px; border-radius: 4px; background: #dc3545; margin-left: 36.600px; display: flex; align-items: center; justify-content: center; }
.picture svg { width: 17px; height: 14.600px; }

.body { flex: 1; display: flex; min-height: 0; }
aside { width: 300.800px; flex: none; background: #eee; padding: 3.100px 1.100px 0 2.100px; }
.head { background: #5a6168; height: 70.200px; }
h5 { margin: 0; padding-right: 7.500px; text-align: center; color: #fff; font-size: 20px; line-height: 24px; font-weight: 500; }
.actions { display: flex; padding-left: 85.600px; margin-top: 8px; position: relative; }
.act { width: 41.700px; height: 38px; border-radius: 4px; display: flex; align-items: center; justify-content: center; }
.act svg { width: 15px; height: 15px; }
.add { background: #0d6efd; }
.del { background: #dc3545; }
.filter { background: #198754; }
.actions .dashes { position: absolute; left: 82.200px; top: -1.900px; width: 48px; height: 46px; }
.sponsor { height: 50.100px; padding-left: 73.500px; }
.wmo { width: 150px; height: 50.100px; }
.lists { background: #5a6168; height: 608.600px; padding: 16px 4.500px 0; }
.card { background: #fff; border: 1px solid #dcdedf; border-radius: 4px; overflow: hidden; height: 560.700px; }
.group { background: #28608f; height: 51.800px; display: flex; padding-left: 7.200px; }
.group .name { width: 149.900px; padding-top: 5px; color: #fff; font-size: 18px; line-height: 26px; font-weight: 500; }
.box { width: 17px; height: 17px; flex: none; border: 1px solid #767676; border-radius: 3px; background: #fff; }
.box.on { background: #0075ff; border-color: #0075ff; }
.box.big { width: 22.400px; height: 22.400px; margin-top: 14.300px; border-radius: 4px; border-width: 1.500px; }
.trio { display: flex; margin: 10.200px 0 0 11.200px; height: 31px; }
.trio span { width: 32px; background: #0d6efd; border-radius: 3px; display: flex; align-items: center; justify-content: center; }
.trio svg, .cell svg { width: 14px; height: 14px; }
.service { height: 40px; background: #5a6168; display: flex; align-items: center; padding-left: 25.200px; color: #fff; gap: 1.600px; }
.service svg { width: 21px; height: 20px; }
.views { padding: 16px 0; background: #fff; }
.views.tall { height: 64.200px; }
.view { height: 31.040px; display: flex; align-items: center; padding-left: 9.300px; }
.view .label { width: 81.200px; white-space: nowrap; }
.view .box { margin-right: 13.800px; }
.cell { width: 32.100px; display: flex; justify-content: center; }

.map { flex: 1; position: relative; overflow: hidden; background: #afd3e9; }
.chart { width: 1628.600px; height: 997.600px; }
.shade { mix-blend-mode: multiply; }
.count { font: 8.200px "Liberation Sans", sans-serif; fill: #fff; text-anchor: middle; }
.zoomer, .slider, .expand { position: absolute; background: rgba(255, 255, 255, .4); border-radius: 4px; padding: 3px; width: 27.800px; }
.zoomer { left: 8px; top: 8.100px; height: 51px; display: flex; flex-direction: column; gap: 1.200px; }
.zoomer span { height: 21.900px; background: rgba(0, 60, 136, .5); color: #fff; font-weight: 700; font-size: 18px; line-height: 21px; text-align: center; border-radius: 2px 2px 0 0; }
.zoomer span + span { border-radius: 0 0 2px 2px; }
.slider { left: 8px; top: 72.200px; height: 200.200px; padding-top: 164.200px; }
.slider span { display: block; height: 10.300px; border-radius: 2px; background: rgba(0, 60, 136, .5); }
.expand { right: 8.100px; top: 8.100px; height: 28px; }
.expand svg { width: 21.800px; height: 22px; background: rgba(0, 60, 136, .5); border-radius: 2px; }
.switcher { position: absolute; left: 7.500px; bottom: 1px; width: 43.500px; height: 43.700px; padding: 2.800px; background: rgba(255, 255, 255, .4); border-radius: 4px; }
.switcher svg { width: 38px; height: 38px; background: #fff; border-radius: 2px; }
.credit { position: absolute; right: 7.600px; bottom: .8px; height: 33px; width: 372.600px; background: rgba(255, 255, 255, .8); border-radius: 4px; display: flex; align-items: center; justify-content: space-between; padding: 0 3.200px 0 8.200px; font-size: 18px; color: #111; white-space: nowrap; }
.credit i { font-style: normal; font-weight: 700; width: 21.800px; height: 22px; line-height: 20px; text-align: center; color: #fff; background: #7192bf; border-radius: 2px; }

.modal { position: absolute; z-index: 3; left: 568.200px; top: 58.400px; width: 801px; height: 766.200px; background: #fff; border: 1px solid #c3c4c4; border-radius: 5px; }
.mhead { height: 69px; border-bottom: 1px solid #dee2e6; padding: 0 8px 0 16px; display: flex; align-items: center; justify-content: space-between; }
h4 { margin: 0; font-size: 24px; line-height: 36px; font-weight: 500; }
.close { width: 32px; height: 32px; border-radius: 4px; box-shadow: 0 0 0 4px #c2dbfe; display: flex; align-items: center; justify-content: center; }
.close svg { width: 16px; height: 16px; }
.mbody { padding: 16px; height: 625.400px; }
.line.first { margin-top: 24px; }
.note { margin: 24.400px 0 16.200px; }
.field { height: 38px; border: 1px solid #ced4da; border-radius: 4px; padding: 6px 12px; color: #6c757d; }
.field.area { height: 254px; position: relative; }
.field svg { position: absolute; right: 0; bottom: 0; width: 10px; height: 10px; }
.tick { width: 4px; height: 24px; background: #3367d6; }
.low { margin-top: 16px; }
.btn { display: block; width: max-content; height: 38px; border-radius: 4px; padding: 7px 13px; color: #fff; }
.blue { background: #0d6efd; }
.red { background: #dc3545; }
.green { background: #198754; }
.mfoot { border-top: 1px solid #dee2e6; padding: 16px 16px 0; display: flex; justify-content: flex-end; }
.sep { width: 4px; height: 38px; background: #3367d6; }

.arrow { position: absolute; z-index: 4; left: 202px; top: 142.800px; width: 32px; height: 28px; }
.callout { position: absolute; z-index: 4; left: 268.300px; top: 160.800px; width: 291px; height: 47.200px; border: 1px solid #fff; border-radius: 4px; background: #ffb3c1; color: #7e6b97; font-weight: 700; font-size: 24.150px; line-height: 44.400px; padding-left: 17.500px; white-space: nowrap; }
</style>
